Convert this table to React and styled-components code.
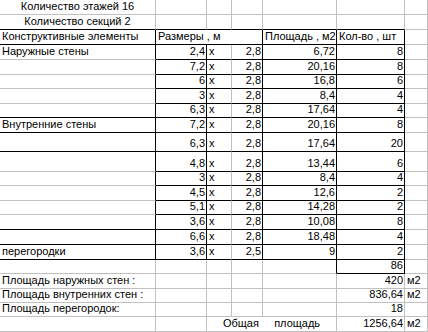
import React from 'react';
import styled, { createGlobalStyle } from 'styled-components';

const LINE = '#c0c0c0';
const INK = '#000';

// row heights, bottom gridline included
const ROWS = [15, 15, 15, 15, 15, 14, 15, 14, 15, 19, 20, 14, 15, 14, 15, 15, 15, 14, 15, 14, 14, 15];

const items = [
  { label: 'Наружные стены', a: '2,4', b: '2,8', s: '6,72', n: '8' },
  { a: '7,2', b: '2,8', s: '20,16', n: '8' },
  { a: '6', b: '2,8', s: '16,8', n: '6' },
  { a: '3', b: '2,8', s: '8,4', n: '4' },
  { a: '6,3', b: '2,8', s: '17,64', n: '4', edge: INK },
  { label: 'Внутренние стены', a: '7,2', b: '2,8', s: '20,16', n: '8', edge: INK },
  { a: '6,3', b: '2,8', s: '17,64', n: '20', edge: INK },
  { a: '4,8', b: '2,8', s: '13,44', n: '6' },
  { a: '3', b: '2,8', s: '8,4', n: '4' },
  { a: '4,5', b: '2,8', s: '12,6', n: '2' },
  { a: '5,1', b: '2,8', s: '14,28', n: '2' },
  { a: '3,6', b: '2,8', s: '10,08', n: '8', edge: INK },
  { a: '6,6', b: '2,8', s: '18,48', n: '4', edge: INK },
  { label: 'перегородки', a: '3,6', b: '2,5', s: '9', n: '2', edge: INK },
];

const totals = [
  { label: 'Площадь наружных стен :', value: '420', unit: 'м2' },
  { label: 'Площадь внутренних стен :', value: '836,64', unit: 'м2' },
  { label: 'Площадь перегородок:', value: '18' },
];

const GlobalStyle = createGlobalStyle`
  body {
    margin: 0;
    background: #fff;
  }
`;

const Sheet = styled.div`
  display: grid;
  grid-template-columns: 156px 51px 25px 31px 74px 68px 23px;
  grid-template-rows: ${ROWS.map((h) => `${h}px`).join(' ')};
  width: 428px;
  height: 332px;
  overflow: hidden;
  background: #fff;
  font-family: "Liberation Sans", Arial, sans-serif;
  color: #000;
`;

const Cell = styled.div`
  grid-column: span ${(p) => p.$span || 1};
  display: flex;
  align-items: flex-end;
  justify-content: ${(p) => (p.$align === 'right' ? 'flex-end' : p.$align === 'center' ? 'center' : 'flex-start')};
  padding: 0 ${(p) => (p.$align === 'right' ? '1px' : '2px')} 2px 2px;
  border-right: 1px solid ${(p) => p.$r || LINE};
  border-bottom: 1px solid ${(p) => p.$b || LINE};
  font-size: 11px;
  line-height: 12px;
  white-space: pre;
  overflow: visible;
  min-width: 0;
`;

const Blank = ({ n = 1, ...rest }) =>
  Array.from({ length: n }, (_, i) => <Cell key={i} {...rest} />);

export default function App() {
  return (
    <>
      <GlobalStyle />
      <Sheet>
        <Cell $align="center">Количество этажей 16</Cell>
        <Blank n={6} />

        <Cell $align="center" $b={INK}>Количество секций 2</Cell>
        <Blank n={5} $b={INK} />
        <Cell />

        <Cell $r={INK} $b={INK}>Конструктивные элементы</Cell>
        <Cell $span={3} $r={INK} $b={INK}>Размеры , м</Cell>
        <Cell $r={INK} $b={INK}>Площадь , м2</Cell>
        <Cell $r={INK} $b={INK}>Кол-во , шт</Cell>
        <Cell />

        {items.map((it, i) => (
          <React.Fragment key={i}>
            <Cell $r={INK} $b={it.edge}>{it.label || ''}</Cell>
            <Cell $align="right" $r={INK} $b={INK}>{it.a}</Cell>
            <Cell $b={INK}>x</Cell>
            <Cell $align="right" $r={INK} $b={INK}>{it.b}</Cell>
            <Cell $align="right" $r={INK} $b={INK}>{it.s}</Cell>
            <Cell $align="right" $r={INK} $b={INK}>{it.n}</Cell>
            <Cell />
          </React.Fragment>
        ))}

        <Blank n={4} />
        <Cell $r={INK} />
        <Cell $align="right" $r={INK} $b={INK}>86</Cell>
        <Cell />

        {totals.map((t, i) => (
          <React.Fragment key={i}>
            <Cell>{t.label}</Cell>
            <Blank n={4} />
            <Cell $align="right">{t.value}</Cell>
            <Cell>{t.unit || ''}</Cell>
          </React.Fragment>
        ))}

        <Blank n={2} />
        <Cell $span={3} $align="center">Общая     площадь</Cell>
        <Cell $align="right">1256,64</Cell>
        <Cell>м2</Cell>
      </Sheet>
    </>
  );
}
